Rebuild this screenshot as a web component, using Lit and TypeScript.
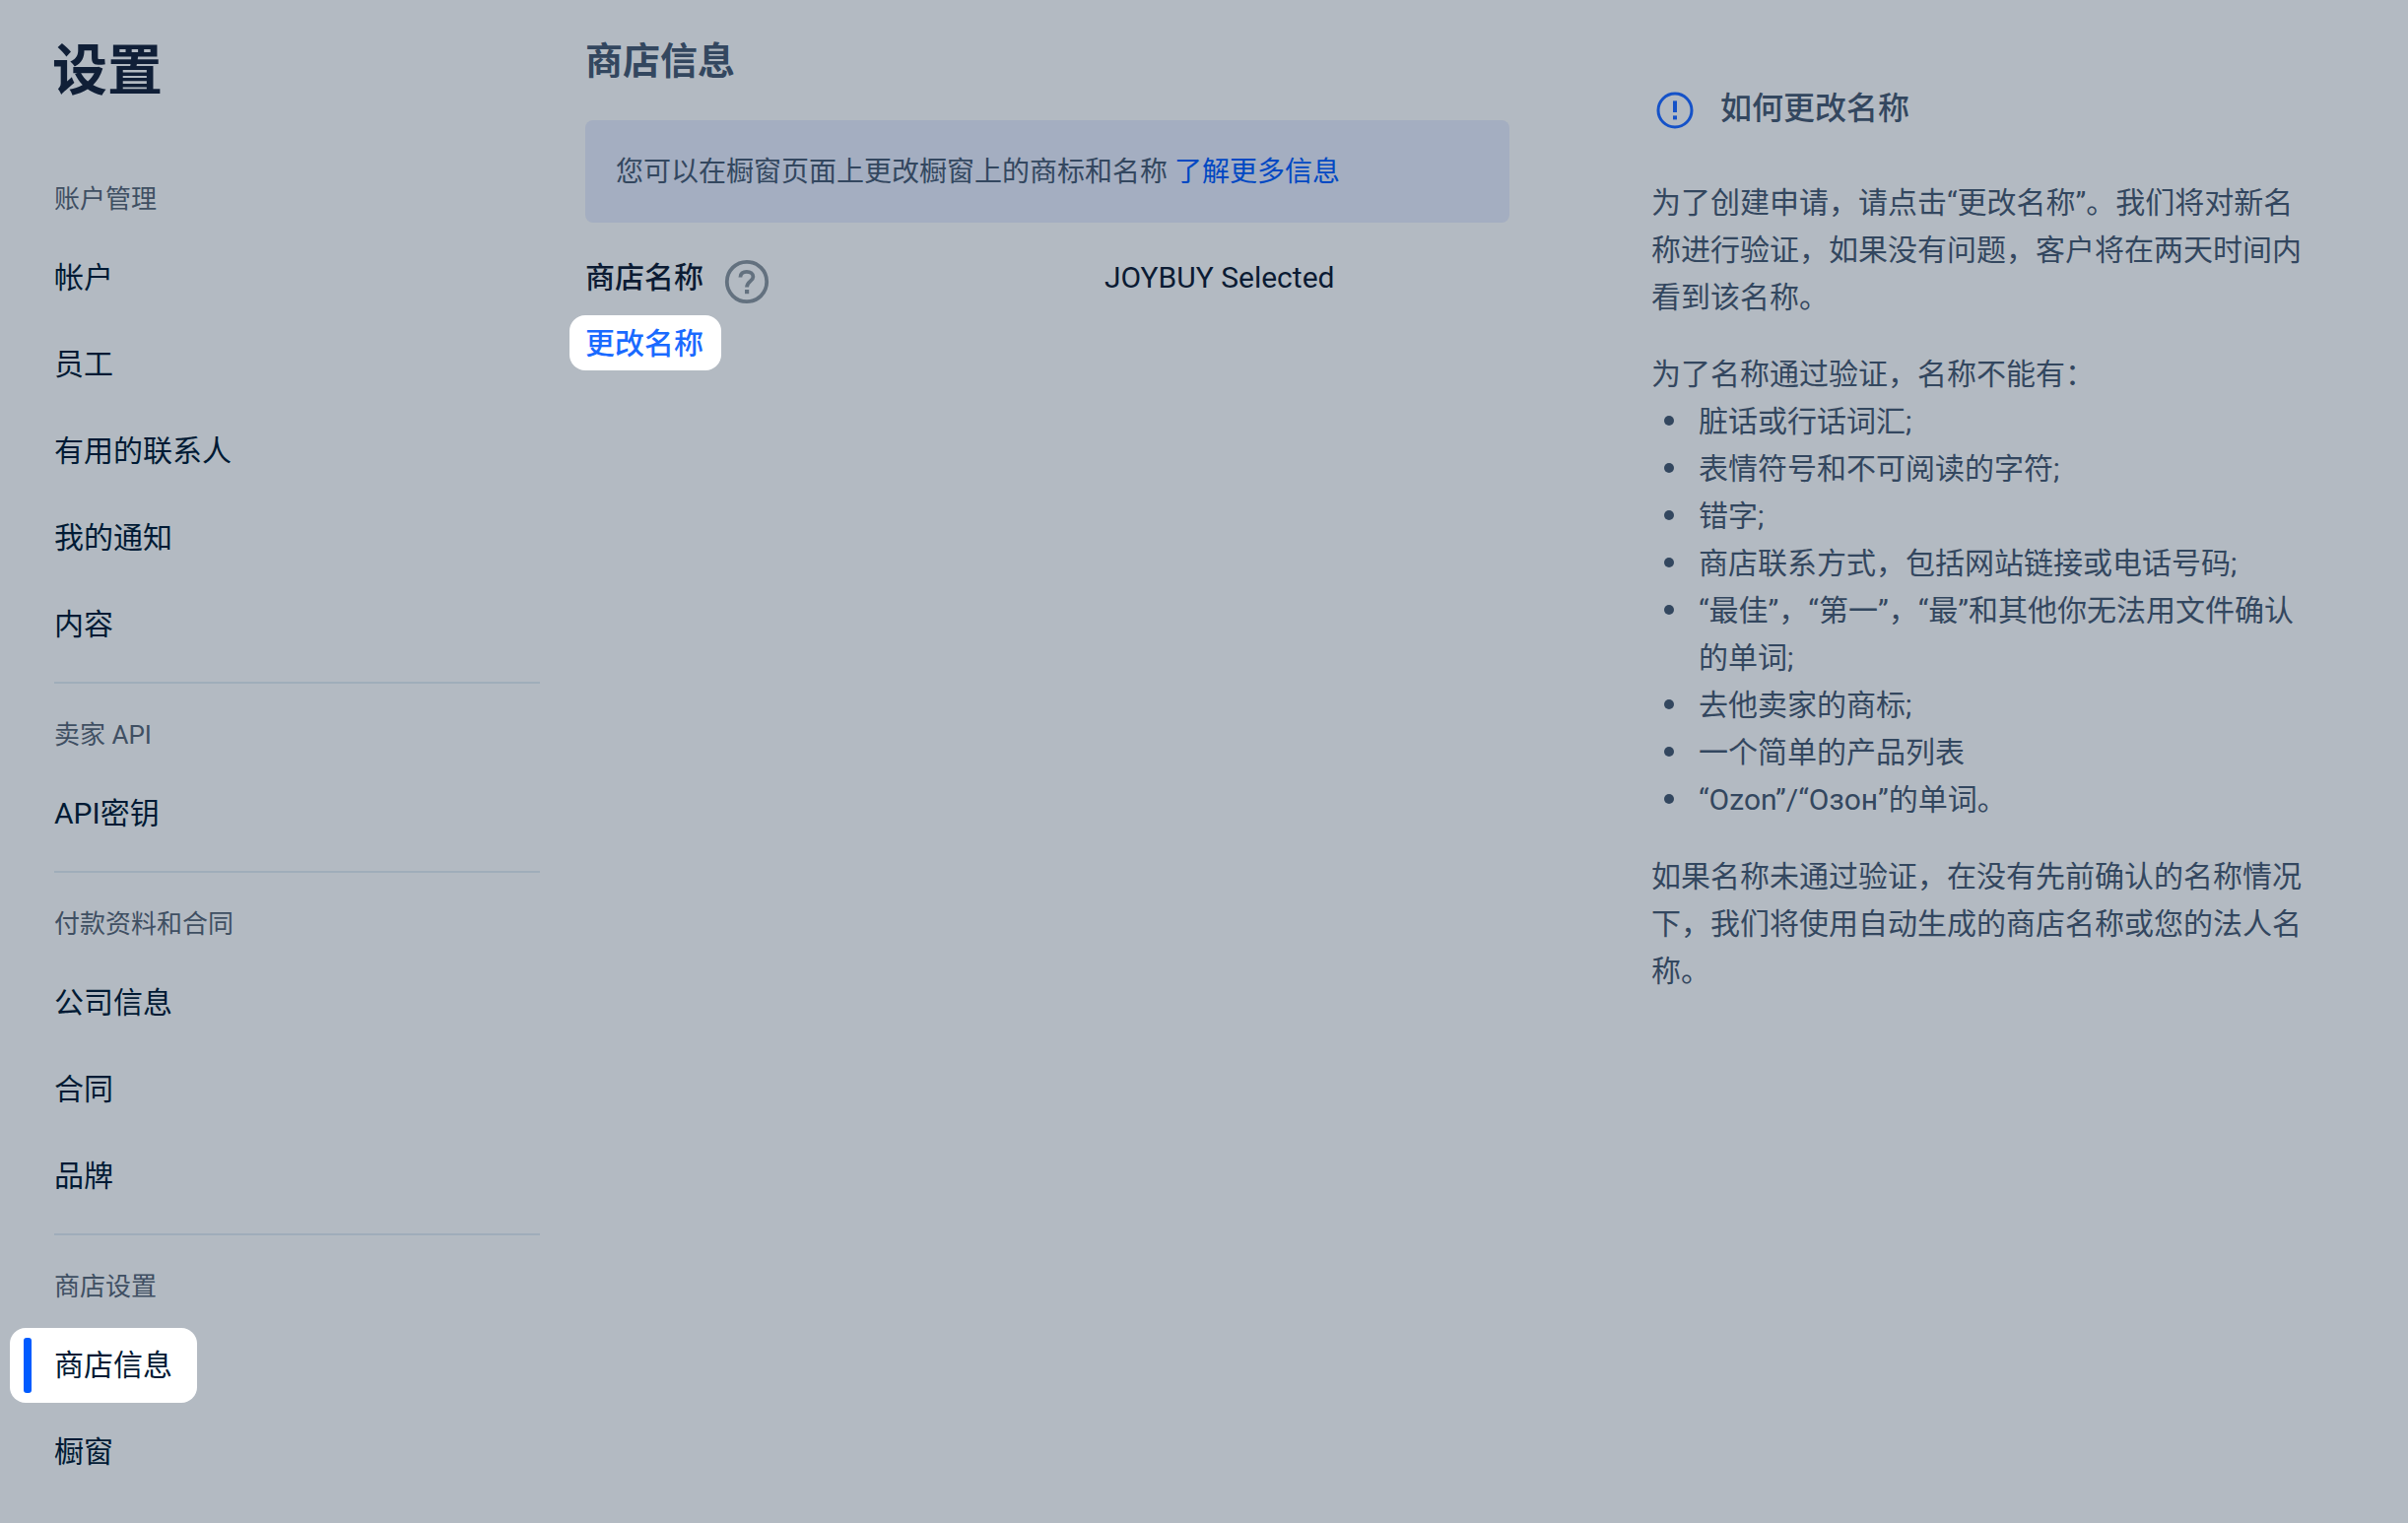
import { LitElement, html, css } from "lit";
import { customElement } from "lit/decorators.js";
import { classMap } from "lit/directives/class-map.js";

interface NavItem {
  label: string;
  active?: boolean;
}

interface NavSection {
  title: string;
  items: NavItem[];
}

const SECTIONS: NavSection[] = [
  {
    title: "账户管理",
    items: [
      { label: "帐户" },
      { label: "员工" },
      { label: "有用的联系人" },
      { label: "我的通知" },
      { label: "内容" },
    ],
  },
  { title: "卖家 API", items: [{ label: "API密钥" }] },
  {
    title: "付款资料和合同",
    items: [{ label: "公司信息" }, { label: "合同" }, { label: "品牌" }],
  },
  {
    title: "商店设置",
    items: [{ label: "商店信息", active: true }, { label: "橱窗" }],
  },
];

const RULES: string[] = [
  "脏话或行话词汇;",
  "表情符号和不可阅读的字符;",
  "错字;",
  "商店联系方式，包括网站链接或电话号码;",
  "“最佳”，“第一”，“最”和其他你无法用文件确认的单词;",
  "去他卖家的商标;",
  "一个简单的产品列表",
  "“Ozon”/“Озон”的单词。",
];

@customElement("settings-nav")
export class SettingsNav extends LitElement {
  static styles = css`
    :host {
      display: block;
    }
    .title {
      margin: 0;
      padding: 32px 0 38px 53px;
      font-size: 56px;
      line-height: 80px;
      font-weight: 700;
      color: #101f37;
    }
    .section + .section {
      margin-top: 14px;
    }
    .section + .section .caption {
      border-top: 2px solid #9fadba;
    }
    .caption {
      margin: 0 0 0 55px;
      padding: 34px 0 18px;
      font-size: 26px;
      line-height: 36px;
      font-weight: 400;
      color: #3f4f62;
    }
    .list {
      list-style: none;
      margin: 0;
      padding: 0 0 0 10px;
    }
    .item {
      display: flex;
      align-items: center;
      height: 88px;
    }
    .link {
      position: relative;
      padding: 16px 25px 16px 45px;
      border-radius: 16px;
      font-size: 30px;
      line-height: 44px;
      color: #001a34;
      text-decoration: none;
    }
    .active {
      background: #fff;
    }
    .active::before {
      content: "";
      position: absolute;
      left: 14px;
      top: 10px;
      bottom: 10px;
      width: 8px;
      border-radius: 3px;
      background: #005bff;
    }
  `;

  render() {
    return html`
      <h1 class="title">设置</h1>
      <nav aria-label="设置">
        ${SECTIONS.map(
          (section) => html`
            <section class="section">
              <h2 class="caption">${section.title}</h2>
              <ul class="list">
                ${section.items.map(
                  (item) => html`
                    <li class="item">
                      <a
                        href="#"
                        class=${classMap({ link: true, active: !!item.active })}
                        >${item.label}</a
                      >
                    </li>
                  `
                )}
              </ul>
            </section>
          `
        )}
      </nav>
    `;
  }
}

@customElement("store-info")
export class StoreInfo extends LitElement {
  static styles = css`
    :host {
      display: block;
    }
    .heading {
      margin: 0;
      padding: 37px 0 35px;
      font-size: 38px;
      line-height: 50px;
      font-weight: 700;
      color: #33475f;
    }
    .banner {
      margin: 0;
      padding: 31px 31px 29px;
      border-radius: 8px;
      background: #a4aec1;
      font-size: 28px;
      line-height: 44px;
      color: #33475f;
    }
    .more {
      color: #0048c3;
      text-decoration: none;
    }
    .row {
      display: grid;
      grid-template-columns: 527fr 411fr;
      align-items: center;
      padding-top: 34px;
      font-size: 30px;
      line-height: 44px;
      color: #0b1b33;
    }
    .name {
      display: flex;
      gap: 21px;
      font-weight: 500;
    }
    .help {
      display: flex;
      padding: 3px 0 0;
      border: 0;
      background: none;
      color: #63717f;
      height: 44px;
    }
    .help svg {
      flex: none;
    }
    .value {
      margin: 0;
    }
    .change {
      margin: 16px 0 0 -16px;
      padding: 7px 18px 5px 16px;
      border: 0;
      border-radius: 16px;
      background: #fff;
      font: inherit;
      font-size: 30px;
      line-height: 44px;
      font-weight: 500;
      color: #1a6aff;
    }
  `;

  render() {
    return html`
      <h2 class="heading">商店信息</h2>
      <p class="banner">
        您可以在橱窗页面上更改橱窗上的商标和名称
        <a class="more" href="#">了解更多信息</a>
      </p>
      <div class="row">
        <div class="name">
          <span>商店名称</span>
          <button class="help" type="button" aria-label="帮助">
            <svg width="46" height="46" viewBox="0 0 46 46" fill="none">
              <circle cx="23" cy="23" r="20.2" stroke="currentColor" stroke-width="3.8" />
              <path
                d="M16.4 18.4C16.4 14.8 19 12.8 22.8 12.8C26.8 12.8 29.4 14.8 29.4 18C29.4 22.4 23 22.6 23 28.6"
                stroke="currentColor"
                stroke-width="3.8"
              />
              <rect x="21" y="31" width="4.2" height="4.2" fill="currentColor" />
            </svg>
          </button>
        </div>
        <p class="value">JOYBUY Selected</p>
      </div>
      <button class="change" type="button">更改名称</button>
    `;
  }
}

@customElement("rename-help")
export class RenameHelp extends LitElement {
  static styles = css`
    :host {
      display: block;
      font-size: 30px;
      line-height: 48px;
      color: #33475f;
    }
    .heading {
      display: flex;
      align-items: flex-end;
      gap: 27px;
      margin: 0 0 51px;
      padding: 89px 0 0 5px;
      font-size: 32px;
      line-height: 42px;
      font-weight: 500;
    }
    .text {
      margin: 0;
    }
    .text + .text,
    .rules + .text {
      margin-top: 30px;
    }
    .rules {
      list-style: none;
      margin: 0;
      padding: 0;
    }
    .rule {
      display: flex;
      gap: 25px;
      padding-left: 13px;
    }
    .rule::before {
      content: "";
      flex: none;
      width: 10px;
      height: 10px;
      margin-top: 18px;
      border-radius: 50%;
      background: #33475f;
    }
  `;

  render() {
    return html`
      <h2 class="heading">
        <svg width="38" height="38" viewBox="0 0 38 38" fill="none" aria-hidden="true">
          <circle cx="19" cy="19" r="17" stroke="#1552c8" stroke-width="3" />
          <path d="M19 9.4V21" stroke="#1552c8" stroke-width="4" />
          <path d="M19 24.4V28.4" stroke="#1552c8" stroke-width="4" />
        </svg>
        如何更改名称
      </h2>
      <p class="text">
        为了创建申请，请点击“更改名称”。我们将对新名称进行验证，如果没有问题，客户将在两天时间内看到该名称。
      </p>
      <p class="text">为了名称通过验证，名称不能有：</p>
      <ul class="rules">
        ${RULES.map((rule) => html`<li class="rule"><span>${rule}</span></li>`)}
      </ul>
      <p class="text">
        如果名称未通过验证，在没有先前确认的名称情况下，我们将使用自动生成的商店名称或您的法人名称。
      </p>
    `;
  }
}

@customElement("app-root")
export class AppRoot extends LitElement {
  static styles = css`
    :host {
      display: block;
      box-sizing: border-box;
      min-height: 100vh;
      background: #b3bac2;
      font-family: Roboto, "Noto Sans CJK SC", sans-serif;
    }
    .page {
      display: grid;
      grid-template-columns: 548px minmax(0, 984fr) minmax(0, 813fr);
      padding-right: 99px;
    }
    .main {
      padding-left: 46px;
    }
    .aside {
      padding-left: 144px;
    }
  `;

  render() {
    return html`
      <div class="page" lang="zh-CN">
        <settings-nav></settings-nav>
        <main class="main"><store-info></store-info></main>
        <aside class="aside"><rename-help></rename-help></aside>
      </div>
    `;
  }
}
